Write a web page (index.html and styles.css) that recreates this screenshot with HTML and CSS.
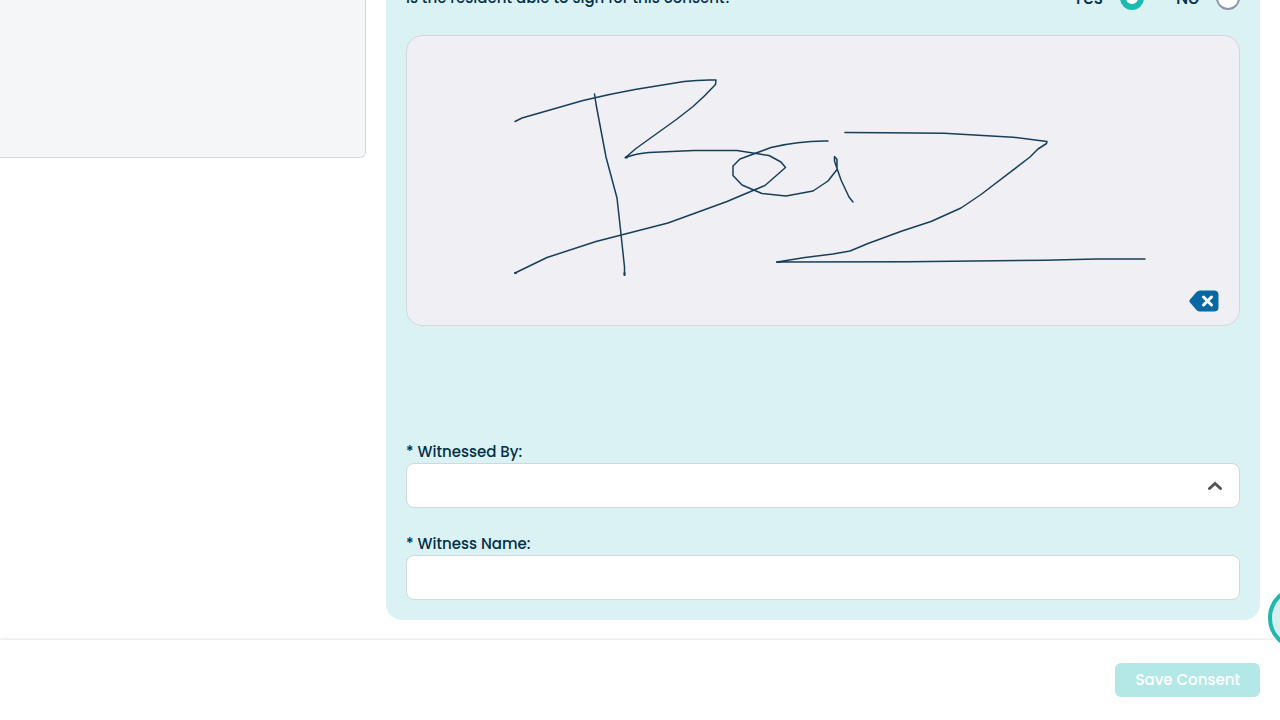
FILE: index.html
```html
<!DOCTYPE html>
<html lang="en">
<head>
<meta charset="utf-8">
<meta name="viewport" content="width=device-width, initial-scale=1">
<title>Consent</title>
<link rel="stylesheet" href="styles.css">
</head>
<body>
<div class="screen">
  <main class="content">
    <div class="columns">
      <section class="document" aria-label="Document"></section>
      <form class="consent" id="consent">
        <fieldset class="question">
          <legend class="question-text">Is the resident able to sign for this consent?</legend>
          <div class="choices">
            <label class="choice">Yes <input type="radio" name="able" checked></label>
            <label class="choice">No <input type="radio" name="able"></label>
          </div>
        </fieldset>
        <div class="signature">
          <svg class="ink" viewBox="407 36 832 289" role="img" aria-label="Signature">
            <path d="M515 121.500L522 118L583 100.500Q610 94 635 89.500L684 81.500Q700 79.500 716 80L715.500 84.500Q704 97 693 106.500L677 119L636 148.500L625.500 157.500Q636 153.500 649 152.500L694 150.500H737L769 155.500L781 162L785.500 167.500L765 185.500L727 201.500L668 223L596 241.500L547 257.500L515 273"/>
            <path d="M594.500 94L596 104L606 157L617 198L620 225L624.500 267V275"/>
            <path d="M828 141Q800 140.500 771 147.500L740 159L733 166V175.500L742 185L762 193.500L786 196L813 191L828 181L837 169.500L837 159.500L834.500 156.500L834.500 161L841 180L849 197L853 202"/>
            <path d="M845 132.500L885 132.700L944 133.300L1013 137.200L1047 141.500L1046.500 143.500L1038 149L1030 157L981 194.500L961 208L931 221.500L902 231L868 243.500L850 251L833 254L805 257.500L777 262L908 261.700L1045 260.200L1096 259H1145"/>
            <path class="dots" d="M777 262H780M624.500 273V275M515 273H516M625.500 157.500H627"/>
          </svg>
          <button class="clear" type="button" aria-label="Clear signature">
            <svg viewBox="0 0 30 22" width="30" height="22" aria-hidden="true">
              <path class="key" d="M11 .500H25Q29.500 .500 29.500 5V17Q29.500 21.500 25 21.500H11Q9 21.500 7.500 20L1 12.500Q-.200 11 1 9.500L7.500 2Q9 .500 11 .500Z"/>
              <path class="cross" d="M14.500 7L22.500 15M22.500 7L14.500 15"/>
            </svg>
          </button>
        </div>
        <div class="fields">
          <div class="field">
            <label for="witness-by">* Witnessed By:</label>
            <div class="select-box">
              <select id="witness-by"><option></option></select>
              <svg class="chevron" viewBox="0 0 16 10" width="16" height="10" aria-hidden="true"><path d="M2.500 7.500L8 2.500L13.500 7.500"/></svg>
            </div>
          </div>
          <div class="field">
            <label for="witness-name">* Witness Name:</label>
            <input id="witness-name" type="text">
          </div>
        </div>
      </form>
    </div>
  </main>
  <footer class="actions">
    <button class="save" type="submit" form="consent" disabled>Save Consent</button>
  </footer>
  <button class="bubble" type="button" aria-label="Help"></button>
</div>
</body>
</html>
```
FILE: styles.css
```css
* { box-sizing: border-box; }

body {
  margin: 0;
  color: #042f49;
  background: #fff;
  font: 500 15px/22px Poppins, Inter, sans-serif;
}

.screen {
  position: relative;
  display: flex;
  flex-direction: column;
  height: 100vh;
  overflow: hidden;
}

.content {
  flex: 1;
  min-height: 0;
  display: flex;
  flex-direction: column;
  justify-content: flex-end;
  padding: 0 20px 20px 0;
}

.columns {
  flex: none;
  display: grid;
  grid-template-columns: 366px 1fr;
  gap: 20px;
  align-items: start;
}

.document {
  height: 192px;
  border: 1px solid #d5d9de;
  border-left: 0;
  border-radius: 0 0 6px 0;
  background: #f4f6f8;
}

.consent {
  padding: 20px;
  border-radius: 16px;
  background: #daf2f3;
}

.question {
  display: flex;
  align-items: center;
  justify-content: space-between;
  margin: 0 0 25px;
  padding: 0;
  border: 0;
}

.question-text {
  float: left;
  padding: 0;
  line-height: 24px;
}

.choices { display: flex; gap: 32px; margin-left: auto; }

.choice {
  display: flex;
  align-items: center;
  gap: 17px;
  font-size: 17px;
}

.choice input {
  appearance: none;
  width: 24px;
  height: 24px;
  margin: 0;
  border: 2px solid #8f94aa;
  border-radius: 50%;
  background: #fff;
}

.choice input:checked { border: 6px solid #1cbbb0; }

.signature {
  position: relative;
  border: 1px solid #d3d8df;
  border-radius: 16px;
  background: #f0eff4;
}

.ink {
  display: block;
  width: 100%;
  fill: none;
  stroke: #173f59;
  stroke-width: 1.500;
  stroke-linecap: round;
  stroke-linejoin: round;
}

.dots { stroke-width: 2; }

.clear {
  position: absolute;
  right: 20px;
  bottom: 13px;
  padding: 0;
  border: 0;
  background: none;
}

.clear svg { display: block; }
.key { fill: #0868a3; }
.cross { fill: none; stroke: #fff; stroke-width: 3; stroke-linecap: round; }

.fields {
  display: grid;
  gap: 25px;
  margin-top: 115px;
}

.field label { display: block; }

.field input,
.field select {
  display: block;
  width: 100%;
  height: 45px;
  padding: 0 16px;
  border: 1px solid #cfd8de;
  border-radius: 8px;
  background: #fff;
  color: inherit;
  font: inherit;
  appearance: none;
}

.select-box { position: relative; }

.chevron {
  position: absolute;
  right: 17px;
  top: 18px;
  fill: none;
  stroke: #505257;
  stroke-width: 3;
  stroke-linecap: round;
  pointer-events: none;
}

.actions {
  display: flex;
  align-items: center;
  justify-content: flex-end;
  height: 80px;
  padding: 0 20px;
  background: #fff;
  box-shadow: 0 0 4px rgba(0, 0, 0, 0.16);
}

.save {
  padding: 6px 20px;
  border: 0;
  border-radius: 6px;
  background: #b3e8e6;
  color: #fff;
  font: inherit;
}

.bubble {
  position: absolute;
  right: -52px;
  bottom: 70px;
  width: 64px;
  height: 64px;
  border: 4px solid #22b8ad;
  border-radius: 50%;
  background: #d5f0ef;
}
```
